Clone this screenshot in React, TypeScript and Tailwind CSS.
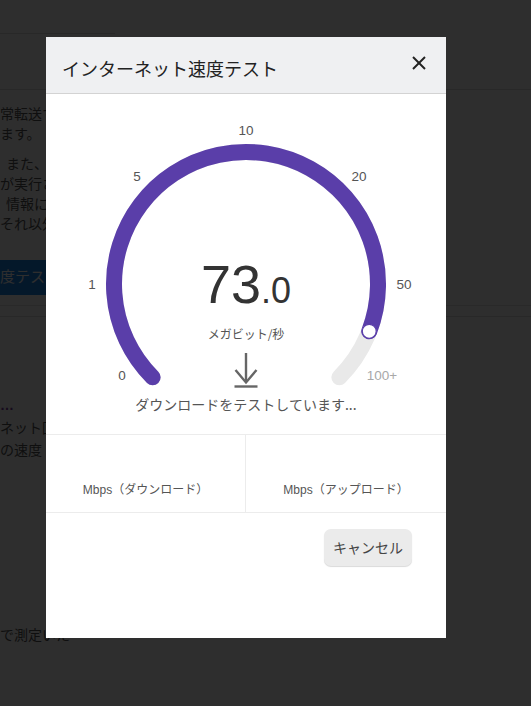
import React from "react";

const PURPLE = "#5a3ea9";

function Gauge() {
  const labels: { t: string; x: number; y: number; c: string }[] = [
    { t: "0", x: 76, y: 281, c: "#555" },
    { t: "1", x: 46, y: 190, c: "#555" },
    { t: "5", x: 91, y: 82, c: "#555" },
    { t: "10", x: 200, y: 36, c: "#555" },
    { t: "20", x: 313, y: 82, c: "#555" },
    { t: "50", x: 358, y: 190, c: "#555" },
    { t: "100+", x: 336, y: 281, c: "#a8a8a8" },
  ];
  return (
    <svg className="absolute inset-0" width="400" height="340" viewBox="0 0 400 340">
      <path
        d="M 106.66 283.34 A 132 132 0 1 1 293.34 283.34"
        fill="none"
        stroke="#e9e9e9"
        strokeWidth="16"
        strokeLinecap="round"
      />
      <path
        d="M 106.66 283.34 A 132 132 0 1 1 323.24 237.31"
        fill="none"
        stroke={PURPLE}
        strokeWidth="16"
        strokeLinecap="round"
      />
      <circle cx="323.24" cy="237.31" r="7" fill="#fff" stroke={PURPLE} strokeWidth="1.3" />
      {labels.map((l) => (
        <text
          key={l.t}
          x={l.x}
          y={l.y}
          textAnchor="middle"
          dominantBaseline="central"
          fontSize="13.5"
          fill={l.c}
          fontFamily="'Liberation Sans', Arial, sans-serif"
        >
          {l.t}
        </text>
      ))}
    </svg>
  );
}

function DownloadArrow() {
  return (
    <svg width="24" height="36" viewBox="0 0 24 36" fill="none" stroke="#666" strokeWidth="2.4">
      <line x1="12" y1="1" x2="12" y2="30" />
      <polyline points="1.5,18 12,30.5 22.5,18" strokeLinejoin="miter" />
      <line x1="0.5" y1="34.5" x2="23.5" y2="34.5" />
    </svg>
  );
}

export default function App() {
  return (
    <div className="relative w-[531px] h-[706px] overflow-hidden bg-white font-['Liberation_Sans','Noto_Sans_CJK_JP',sans-serif]">
      {/* background page */}
      <div className="flex flex-col text-[14px] text-[#555]">
        <div className="h-[33px]" />
        <div className="h-[1px] w-[115px] bg-[#dcdcdc]" />
        <div className="h-[55px]" />
        <div className="h-[1px] w-full bg-[#dcdcdc]" />
        <div className="flex flex-col pt-[14px] leading-[20px] whitespace-nowrap">
          <div>常転送す</div>
          <div>ます。</div>
          <div className="mt-[10px] ml-[6px]">また、こ</div>
          <div>が実行さ</div>
          <div className="ml-[6px]">情報にに</div>
          <div>それ以外</div>
        </div>
        <div className="mt-[26px] h-[35px] w-[60px] bg-[#1a84ea] text-white flex items-center whitespace-nowrap text-[15px]">
          度テスト
        </div>
        <div className="mt-[10px] h-[1px] w-full bg-[#e4e4e4]" />
        <div className="mt-[10px] h-[1px] w-full bg-[#dcdcdc]" />
        <div className="mt-[78px] text-[#7a3d9a] leading-[20px] text-[14px] font-bold">…</div>
        <div className="mt-[2px] leading-[22px] whitespace-nowrap">
          <div>ネット回</div>
          <div>の速度</div>
        </div>
        <div className="mt-[164px] leading-[20px] whitespace-nowrap">で測定いた</div>
      </div>

      {/* overlay */}
      <div className="absolute inset-0 bg-black/[0.82]" />

      {/* modal */}
      <div className="absolute left-[46px] top-[37px] w-[400px] h-[601px] bg-white flex flex-col">
        <div className="h-[57px] bg-[#eff0f2] border-b border-[#d3d3d3] flex items-center justify-between pl-4 pr-5">
          <div className="mt-[6px] text-[18px] text-[#222] font-['Noto_Sans_CJK_JP',sans-serif]">
            インターネット速度テスト
          </div>
          <svg className="mb-[4px]" width="14" height="14" viewBox="0 0 14 14" stroke="#222" strokeWidth="1.9">
            <line x1="1" y1="1" x2="13" y2="13" />
            <line x1="13" y1="1" x2="1" y2="13" />
          </svg>
        </div>

        <div className="relative h-[340px] flex flex-col items-center pt-[163px]">
          <Gauge />
          <div className="relative flex items-baseline h-[54px] leading-none text-[#333]">
            <span className="text-[54px] leading-none">73</span>
            <span className="text-[36px] leading-none">.0</span>
          </div>
          <div className="relative mt-[15px] text-[12px] leading-[16px] text-[#555] font-['Noto_Sans_CJK_JP',sans-serif]">
            メガビット/秒
          </div>
          <div className="relative mt-[10px]">
            <DownloadArrow />
          </div>
          <div className="relative mt-[6px] text-[14px] leading-[20px] text-[#555] font-['Noto_Sans_CJK_JP',sans-serif]">
            ダウンロードをテストしています...
          </div>
        </div>

        <div className="grid grid-cols-2 h-[79px] border-t border-b border-[#ececec]">
          <div className="flex justify-center pt-[47px] border-r border-[#ececec]">
            <div className="text-[12px] leading-[16px] text-[#555]">Mbps（ダウンロード）</div>
          </div>
          <div className="flex justify-center pt-[47px]">
            <div className="text-[12px] leading-[16px] text-[#555]">Mbps（アップロード）</div>
          </div>
        </div>

        <div className="flex justify-end pt-[16px] pr-[34px]">
          <button className="w-[88px] h-[37px] rounded-[7px] bg-[#ebebeb] shadow-[0_1px_1px_rgba(0,0,0,0.15)] text-[14px] text-[#444] font-['Noto_Sans_CJK_JP',sans-serif]">
            キャンセル
          </button>
        </div>
      </div>
    </div>
  );
}
